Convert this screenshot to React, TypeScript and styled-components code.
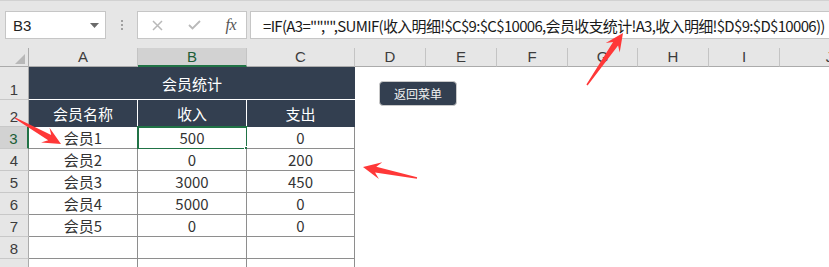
import React from 'react';
import styled, { createGlobalStyle } from 'styled-components';

const GlobalStyle = createGlobalStyle`
  html, body { margin: 0; padding: 0; background: #ffffff; }
  body { font-family: "Noto Sans CJK SC", "Noto Sans", sans-serif; overflow: hidden; }
  #root { width: 829px; height: 267px; }
`;

const DARK = '#333f50';
const GREEN = '#217346';
const GRID = '#8e8e8e';

const Page = styled.div`
  position: relative;
  width: 829px;
  height: 267px;
  overflow: hidden;
  background: #ffffff;
`;

const TopBar = styled.div`
  box-sizing: border-box;
  height: 48px;
  background: #e6e6e6;
  border-top: 1px solid #d2d2d2;
  display: flex;
  align-items: flex-start;
  padding: 10px 0 0 5px;
`;

const Box = styled.div`
  box-sizing: border-box;
  height: 28px;
  background: #ffffff;
  border: 1px solid #c6c6c6;
  display: flex;
  align-items: center;
  flex: none;
`;

const NameBox = styled(Box)`
  width: 101px;
  padding: 0 6px 0 7px;
  justify-content: space-between;
  font: 15px "Liberation Sans", Arial, sans-serif;
  color: #222;
`;

const Dots = styled.div`
  width: 31px;
  height: 28px;
  flex: none;
  display: flex;
  flex-direction: column;
  align-items: center;
  justify-content: center;
  gap: 2px;
`;

const Dot = styled.span`
  width: 2px;
  height: 2px;
  background: #a0a0a0;
`;

const FuncBox = styled(Box)`
  width: 110px;
  padding: 0 10px 0 14px;
  justify-content: space-between;
`;

const Fx = styled.span`
  font: italic 16px "Liberation Serif", "Times New Roman", serif;
  color: #555;
  letter-spacing: -0.5px;
`;

const FormulaBox = styled(Box)`
  flex: 1;
  margin-left: 3px;
  margin-right: -2px;
  padding-left: 12px;
  font-size: 15px;
  letter-spacing: -0.68px;
  color: #1a1a1a;
  white-space: nowrap;
  overflow: hidden;
`;

const Sheet = styled.div`
  display: flex;
  flex-direction: column;
`;

const SheetRow = styled.div<{ $h: number }>`
  display: flex;
  height: ${(p) => p.$h}px;
  flex: none;
`;

const Corner = styled.div`
  box-sizing: border-box;
  width: 29px;
  flex: none;
  background: #e6e6e6;
  border-right: 1px solid #ababab;
  border-bottom: 1px solid #ababab;
  display: flex;
  align-items: flex-end;
  justify-content: flex-end;
  padding: 0 3px 2px 0;
`;

const ColHead = styled.div<{ $w: number; $active?: boolean }>`
  box-sizing: border-box;
  width: ${(p) => p.$w}px;
  flex: none;
  background: ${(p) => (p.$active ? '#d2d2d2' : '#e6e6e6')};
  border-right: 1px solid #c4c4c4;
  border-bottom: ${(p) => (p.$active ? `2px solid ${GREEN}` : '1px solid #ababab')};
  display: flex;
  align-items: flex-end;
  justify-content: center;
  padding-bottom: ${(p) => (p.$active ? 1 : 2)}px;
  font: 15px/1 "Liberation Sans", Arial, sans-serif;
  color: ${(p) => (p.$active ? '#1d5e38' : '#3c3c3c')};
`;

const RowHead = styled.div<{ $active?: boolean }>`
  box-sizing: border-box;
  width: 29px;
  flex: none;
  background: ${(p) => (p.$active ? '#d2d2d2' : '#e6e6e6')};
  border-right: ${(p) => (p.$active ? `2px solid ${GREEN}` : '1px solid #ababab')};
  border-bottom: 1px solid #c8c8c8;
  display: flex;
  align-items: flex-end;
  justify-content: center;
  padding-bottom: 2px;
  font: 15px/1 "Liberation Sans", Arial, sans-serif;
  color: ${(p) => (p.$active ? '#1d5e38' : '#3c3c3c')};
`;

type Variant = 'title' | 'head' | 'data' | 'blank';

const Cell = styled.div<{ $w: number; $v: Variant; $last?: boolean }>`
  position: relative;
  box-sizing: border-box;
  width: ${(p) => p.$w}px;
  flex: none;
  display: flex;
  align-items: center;
  justify-content: center;
  font-size: 15px;
  line-height: 1;
  background: ${(p) => (p.$v === 'title' || p.$v === 'head' ? DARK : '#ffffff')};
  color: ${(p) => (p.$v === 'title' || p.$v === 'head' ? '#ffffff' : '#333333')};
  border-right: ${(p) =>
    p.$v === 'head' ? `1px solid ${p.$last ? DARK : '#ffffff'}` : p.$v === 'data' ? `1px solid ${GRID}` : 'none'};
  border-bottom: ${(p) =>
    p.$v === 'title' ? '1px solid #ffffff' : p.$v === 'data' ? `1px solid ${GRID}` : 'none'};
`;

const Selection = styled.span`
  position: absolute;
  left: -1px;
  top: -1px;
  right: -2px;
  bottom: -2px;
  border: 2px solid ${GREEN};
  pointer-events: none;
`;

const FillHandle = styled.span`
  position: absolute;
  right: -5px;
  bottom: -5px;
  width: 5px;
  height: 5px;
  background: ${GREEN};
  border: 1px solid #ffffff;
`;

const MenuButton = styled.div`
  position: absolute;
  left: 379px;
  top: 81px;
  box-sizing: border-box;
  width: 78px;
  height: 25px;
  border-radius: 4px;
  border: 1px solid #c9c9c9;
  background: ${DARK};
  color: #f2f2f2;
  font-size: 12px;
  display: flex;
  align-items: center;
  justify-content: center;
`;

const Overlay = styled.svg`
  position: absolute;
  left: 0;
  top: 0;
  pointer-events: none;
`;

const COLS = [
  { k: 'A', w: 109 },
  { k: 'B', w: 109 },
  { k: 'C', w: 108 },
  { k: 'D', w: 71 },
  { k: 'E', w: 71 },
  { k: 'F', w: 71 },
  { k: 'G', w: 70 },
  { k: 'H', w: 71 },
  { k: 'I', w: 71 },
  { k: 'J', w: 100 },
];

const DATA: [string, string, string][] = [
  ['会员1', '500', '0'],
  ['会员2', '0', '200'],
  ['会员3', '3000', '450'],
  ['会员4', '5000', '0'],
  ['会员5', '0', '0'],
  ['', '', ''],
  ['', '', ''],
];

const EXTRA = COLS.slice(3);

function arrow(x0: number, y0: number, x1: number, y1: number, headLen = 18, headW = 8.5, neckW = 3, tailW = 0.7) {
  const dx = x1 - x0;
  const dy = y1 - y0;
  const L = Math.hypot(dx, dy);
  const ux = dx / L;
  const uy = dy / L;
  const nx = -uy;
  const ny = ux;
  const bx = x1 - ux * headLen;
  const by = y1 - uy * headLen;
  const kx = x1 - ux * (headLen - 5);
  const ky = y1 - uy * (headLen - 5);
  const pts = [
    [x1, y1],
    [bx + nx * headW, by + ny * headW],
    [kx + nx * neckW, ky + ny * neckW],
    [x0 + nx * tailW, y0 + ny * tailW],
    [x0 - nx * tailW, y0 - ny * tailW],
    [kx - nx * neckW, ky - ny * neckW],
    [bx - nx * headW, by - ny * headW],
  ];
  return pts.map((p) => `${p[0].toFixed(1)},${p[1].toFixed(1)}`).join(' ');
}

export default function App() {
  return (
    <Page>
      <GlobalStyle />
      <TopBar>
        <NameBox>
          <span>B3</span>
          <svg width="9" height="5" viewBox="0 0 9 5">
            <path d="M0 0 L9 0 L4.5 5 Z" fill="#6a6a6a" />
          </svg>
        </NameBox>
        <Dots>
          <Dot />
          <Dot />
          <Dot />
        </Dots>
        <FuncBox>
          <svg width="11" height="11" viewBox="0 0 11 11">
            <path d="M1 1 L10 10 M10 1 L1 10" stroke="#b9b9b9" strokeWidth="1.5" fill="none" />
          </svg>
          <svg width="13" height="10" viewBox="0 0 13 10">
            <path d="M1 5 L4.5 8.5 L12 1" stroke="#b9b9b9" strokeWidth="1.8" fill="none" />
          </svg>
          <Fx>fx</Fx>
        </FuncBox>
        <FormulaBox>
          =IF(A3="","",SUMIF(收入明细!$C$9:$C$10006,会员收支统计!A3,收入明细!$D$9:$D$10006))
        </FormulaBox>
      </TopBar>

      <Sheet>
        <SheetRow $h={19}>
          <Corner>
            <svg width="10" height="10" viewBox="0 0 10 10">
              <path d="M10 0 L10 10 L0 10 Z" fill="#b8b8b8" />
            </svg>
          </Corner>
          {COLS.map((c) => (
            <ColHead key={c.k} $w={c.w} $active={c.k === 'B'}>
              {c.k}
            </ColHead>
          ))}
        </SheetRow>

        <SheetRow $h={33}>
          <RowHead>1</RowHead>
          <Cell $w={326} $v="title">会员统计</Cell>
          {EXTRA.map((c) => (
            <Cell key={c.k} $w={c.w} $v="blank" />
          ))}
        </SheetRow>

        <SheetRow $h={27}>
          <RowHead>2</RowHead>
          <Cell $w={109} $v="head">会员名称</Cell>
          <Cell $w={109} $v="head">收入</Cell>
          <Cell $w={108} $v="head" $last>
            支出
          </Cell>
          {EXTRA.map((c) => (
            <Cell key={c.k} $w={c.w} $v="blank" />
          ))}
        </SheetRow>

        {DATA.map((r, i) => (
          <SheetRow key={i} $h={22}>
            <RowHead $active={i === 0}>{i < 6 ? i + 3 : ''}</RowHead>
            <Cell $w={109} $v="data">{r[0]}</Cell>
            <Cell $w={109} $v="data">
              {r[1]}
              {i === 0 && (
                <Selection>
                  <FillHandle />
                </Selection>
              )}
            </Cell>
            <Cell $w={108} $v="data">{r[2]}</Cell>
            {EXTRA.map((c) => (
              <Cell key={c.k} $w={c.w} $v="blank" />
            ))}
          </SheetRow>
        ))}
      </Sheet>

      <MenuButton>返回菜单</MenuButton>

      <Overlay width="829" height="267" viewBox="0 0 829 267">
        <polygon points={arrow(15, 118, 61, 144)} fill="#ff3838" />
        <polygon points={arrow(417, 178, 363, 167)} fill="#ff3838" />
        <polygon points={arrow(587, 85, 623, 33)} fill="#ff3838" />
      </Overlay>
    </Page>
  );
}
